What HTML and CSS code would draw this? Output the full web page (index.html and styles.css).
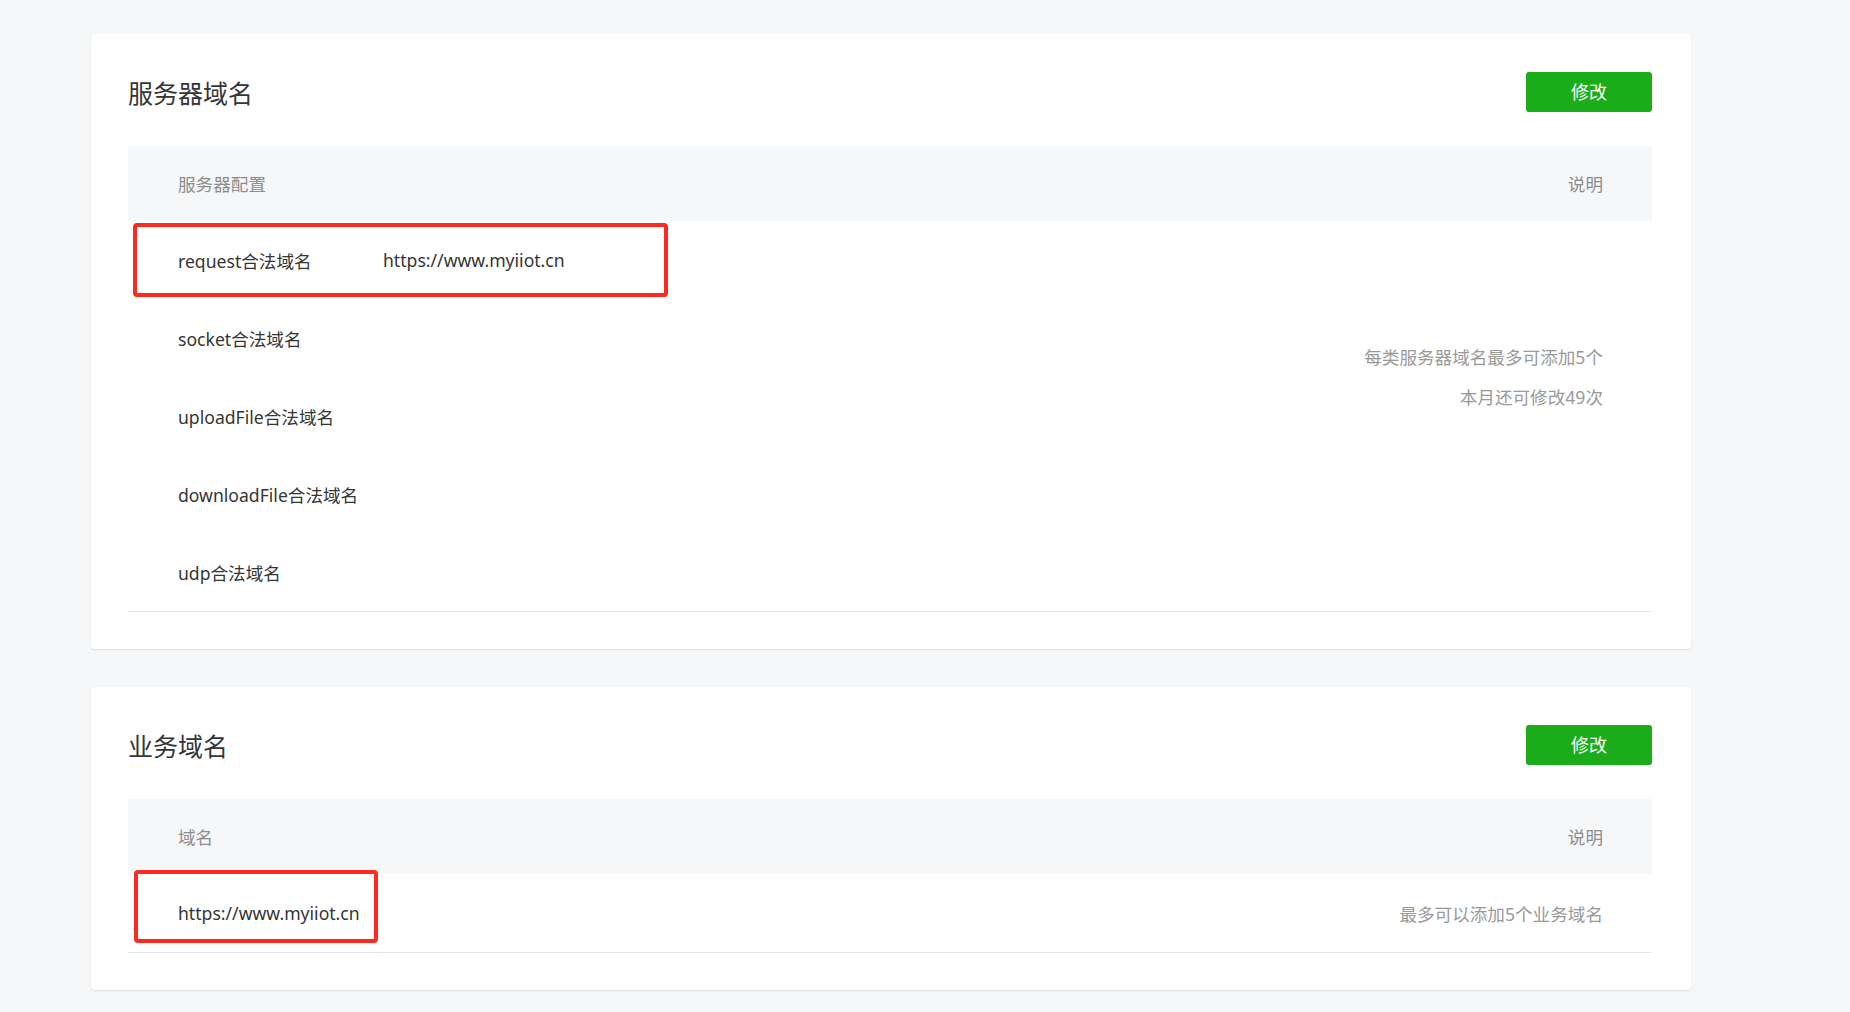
FILE: index.html
```html
<!DOCTYPE html>
<html>
  <head>
    <meta charset="utf-8">
    <title>开发设置</title>
    <link rel="stylesheet" href="styles.css">
  </head>
  <body>
    <div id="container">
      <div class="card">
        <div class="card-hd">
          <h2>服务器域名</h2>
          <a class="btn" href="#">修改</a>
        </div>
        <div class="table">
          <div class="thead">
            <span>服务器配置</span>
            <span class="desc">说明</span>
          </div>
          <div class="tbody server">
            <div class="row">
              <span class="label">request合法域名</span>
              <span class="value">https://www.myiiot.cn</span>
              <i class="mark mark-request"></i>
            </div>
            <div class="row"><span class="label">socket合法域名</span></div>
            <div class="row"><span class="label">uploadFile合法域名</span></div>
            <div class="row"><span class="label">downloadFile合法域名</span></div>
            <div class="row"><span class="label">udp合法域名</span></div>
            <div class="tips">
              <p>每类服务器域名最多可添加5个</p>
              <p>本月还可修改49次</p>
            </div>
          </div>
        </div>
      </div>

      <div class="card">
        <div class="card-hd">
          <h2>业务域名</h2>
          <a class="btn" href="#">修改</a>
        </div>
        <div class="table">
          <div class="thead">
            <span>域名</span>
            <span class="desc">说明</span>
          </div>
          <div class="tbody">
            <div class="row">
              <span class="label">https://www.myiiot.cn</span>
              <span class="tip">最多可以添加5个业务域名</span>
              <i class="mark mark-biz"></i>
            </div>
          </div>
        </div>
      </div>
    </div>
  </body>
</html>
```

FILE: styles.css
```css
*, *::before, *::after {
  padding: 0;
  margin: 0;
  border: 0;
  box-sizing: border-box;
}

body {
  background: #f6f7f9;
  color: #353535;
  font-family: "Noto Sans", "Noto Sans CJK SC", sans-serif;
  font-size: 17.6px;
}

#container {width: 1691px; padding: 34px 0 0 91px;}

.card {background: #fff; border-radius: 4px; box-shadow: 0 1px 2px rgba(0,0,0,0.1); padding: 0 39px 37px 37px; margin-bottom: 38px;}
.card-hd {display: flex; justify-content: space-between; align-items: center; padding-top: 38px; margin-bottom: 34px;}
.card-hd h2 {font-size: 25px; font-weight: normal; color: #353535;}
.btn {display: block; width: 126px; height: 40px; line-height: 40px; text-align: center; background: #1aad19; color: #fff; border-radius: 3px; text-decoration: none; font-size: 18px;}

.thead {display: flex; justify-content: space-between; align-items: center; height: 75px; background: #f6f7f9; color: #8d8d8d; padding: 0 49px 0 50px;}
.tbody {border-bottom: 1px solid #e7e7eb; position: relative;}
.row {display: flex; align-items: center; height: 78px; padding: 0 49px 0 50px; position: relative;}
.row .label {width: 205px;}
.row .tip {margin-left: auto; color: #9a9a9a;}

.tbody.server {display: grid; grid-template-columns: 1fr auto; grid-template-rows: repeat(5, 78px);}
.server .row {grid-column: 1;}
.server .tips {grid-column: 2; grid-row: 1 / span 4; align-self: center; padding-right: 49px; text-align: right; color: #9a9a9a; line-height: 40px;}

.mark {position: absolute; border: 4px solid #fe2a1f; border-radius: 4px;}
.mark-request {left: 5px; top: 2px; width: 535px; height: 74px;}
.mark-biz {left: 6px; top: -4px; width: 244px; height: 73px;}
```
